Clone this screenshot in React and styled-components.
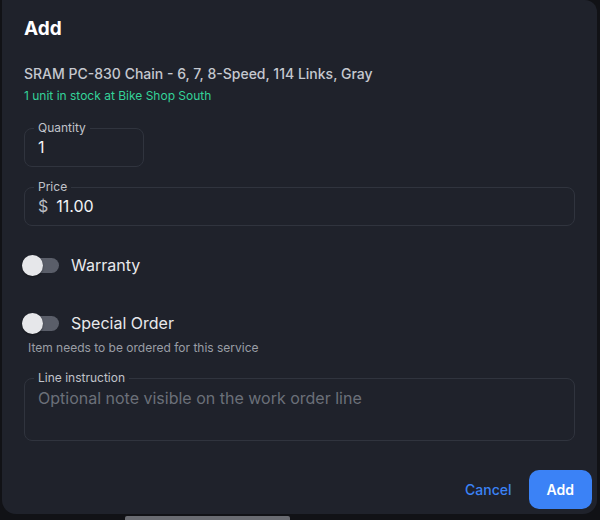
import React from "react";
import styled, { createGlobalStyle } from "styled-components";

const GlobalStyle = createGlobalStyle`
  * { box-sizing: border-box; }
  html, body { margin: 0; padding: 0; }
  body {
    background: #111216;
    font-family: Inter, "Noto Sans", sans-serif;
    color: #f3f4f6;
    -webkit-font-smoothing: antialiased;
  }
`;

const Dialog = styled.div`
  width: 595px;
  height: 514px;
  margin-left: 2px;
  background: #1f222b;
  border-radius: 0 12px 14px 14px;
  padding: 17px 5px 5px 22px;
  display: flex;
  flex-direction: column;
`;

const Title = styled.h2`
  margin: 0;
  font-size: 19px;
  line-height: 24px;
  font-weight: 700;
  color: #ffffff;
`;

const ProductName = styled.div`
  margin-top: 23px;
  font-size: 14px;
  line-height: 20px;
  font-weight: 500;
  color: #c5c8cf;
`;

const Stock = styled.div`
  margin-top: 4px;
  font-size: 12px;
  line-height: 16px;
  color: #34d399;
`;

const Body = styled.div`
  display: flex;
  flex-direction: column;
  padding-right: 17px;
`;

const Field = styled.fieldset`
  margin: ${(p) => p.$top}px 0 0;
  width: ${(p) => (p.$narrow ? "120px" : "100%")};
  border: 1px solid #30343e;
  border-radius: 8px;
  padding: 0 13px ${(p) => p.$bottom ?? 9}px;
  min-width: 0;
`;

const Legend = styled.legend`
  margin-left: -4px;
  padding: 0 4px;
  font-size: 12px;
  line-height: 14px;
  color: #c0c3ca;
`;

const ValueRow = styled.div`
  display: flex;
  align-items: center;
  gap: 8px;
  margin-top: 2px;
  font-size: 16px;
  line-height: 20px;
  color: #f3f4f6;
`;

const Adornment = styled.span`
  color: #b8bbc2;
`;

const Input = styled.input`
  flex: 1;
  min-width: 0;
  border: 0;
  outline: 0;
  padding: 0;
  background: transparent;
  font: inherit;
  color: inherit;
`;

const TextArea = styled.textarea`
  display: block;
  width: 100%;
  height: 52px;
  margin-top: 3px;
  border: 0;
  outline: 0;
  padding: 0;
  resize: none;
  background: transparent;
  font-family: inherit;
  font-size: 16px;
  line-height: 20px;
  color: #f3f4f6;
  &::placeholder { color: #6b7079; }
`;

const ToggleRow = styled.label`
  display: flex;
  align-items: center;
  gap: 12px;
  height: 24px;
  margin-top: ${(p) => p.$top}px;
  margin-left: -2px;
  font-size: 16px;
  color: #e8e9ec;
`;

const Track = styled.span`
  position: relative;
  display: inline-block;
  width: 37px;
  height: 15px;
  border-radius: 8px;
  background: #5a5e69;
`;

const Thumb = styled.span`
  position: absolute;
  left: 0;
  top: -3px;
  width: 21px;
  height: 21px;
  border-radius: 50%;
  background: #e6e7ea;
  box-shadow: 0 1px 2px rgba(0, 0, 0, 0.4);
`;

const Helper = styled.div`
  margin-top: 5px;
  margin-left: 4px;
  font-size: 12px;
  line-height: 16px;
  color: #9a9ea6;
`;

const Actions = styled.div`
  margin-top: auto;
  display: flex;
  justify-content: flex-end;
  align-items: center;
  gap: 17px;
`;

const TextButton = styled.button`
  border: 0;
  background: transparent;
  padding: 0;
  font-family: inherit;
  font-size: 14px;
  font-weight: 500;
  color: #3b82f6;
  cursor: pointer;
`;

const PrimaryButton = styled.button`
  height: 39px;
  padding: 0 18px;
  border: 0;
  border-radius: 10px;
  background: #3b82f6;
  font-family: inherit;
  font-size: 14px;
  font-weight: 600;
  color: #ffffff;
  cursor: pointer;
`;

const Behind = styled.div`
  height: 6px;
  padding-left: 125px;
  display: flex;
  align-items: flex-end;
`;

const BehindBar = styled.div`
  width: 165px;
  height: 4px;
  background: #6a6c72;
  border-radius: 2px 2px 0 0;
`;

function Toggle({ label, top }) {
  return (
    <ToggleRow $top={top}>
      <Track>
        <Thumb />
      </Track>
      {label}
    </ToggleRow>
  );
}

export default function App() {
  return (
    <>
      <GlobalStyle />
      <Dialog>
        <Title>Add</Title>
        <Body>
          <ProductName>SRAM PC-830 Chain - 6, 7, 8-Speed, 114 Links, Gray</ProductName>
          <Stock>1 unit in stock at Bike Shop South</Stock>

          <Field $top={17} $narrow>
            <Legend>Quantity</Legend>
            <ValueRow>
              <Input defaultValue="1" />
            </ValueRow>
          </Field>

          <Field $top={13}>
            <Legend>Price</Legend>
            <ValueRow>
              <Adornment>$</Adornment>
              <Input defaultValue="11.00" />
            </ValueRow>
          </Field>

          <Toggle label="Warranty" top={27} />
          <Toggle label="Special Order" top={34} />
          <Helper>Item needs to be ordered for this service</Helper>

          <Field $top={15} $bottom={0}>
            <Legend>Line instruction</Legend>
            <TextArea placeholder="Optional note visible on the work order line" />
          </Field>
        </Body>
        <Actions>
          <TextButton>Cancel</TextButton>
          <PrimaryButton>Add</PrimaryButton>
        </Actions>
      </Dialog>
      <Behind>
        <BehindBar />
      </Behind>
    </>
  );
}
